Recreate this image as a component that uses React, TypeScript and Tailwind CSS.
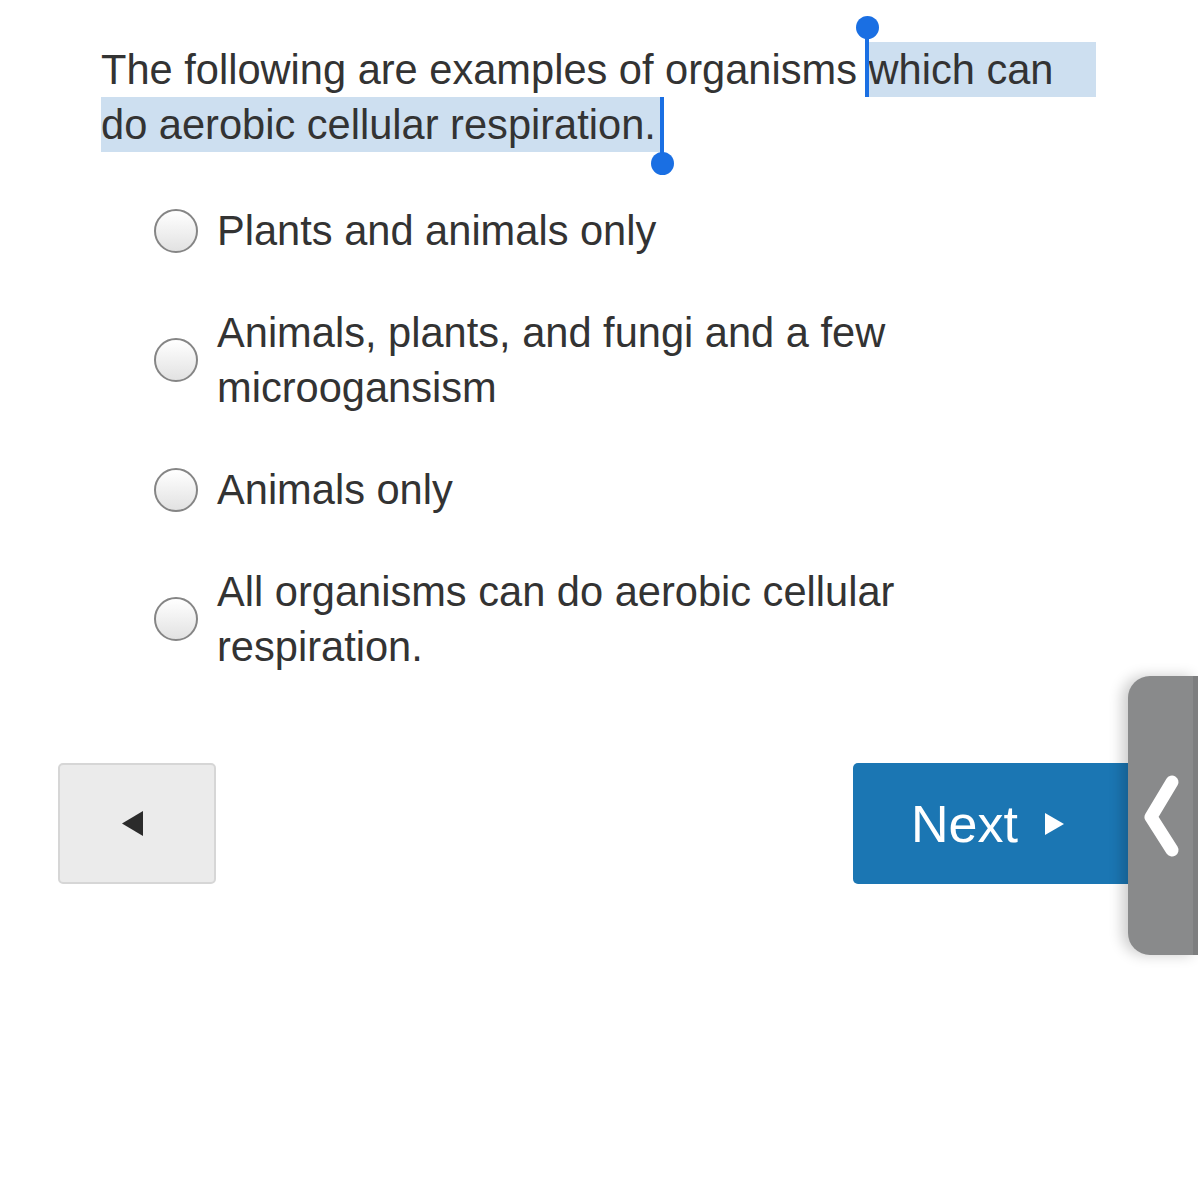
import { useState } from "react";

const options = [
  "Plants and animals only",
  "Animals, plants, and fungi and a few microogansism",
  "Animals only",
  "All organisms can do aerobic cellular respiration.",
];

function Radio({ checked }: { checked: boolean }) {
  return (
    <span className="flex h-[44px] w-[44px] shrink-0 items-center justify-center rounded-full border-[2.5px] border-[#858585] bg-gradient-to-b from-[#ffffff] to-[#e2e2e2]">
      {checked && <span className="h-[18px] w-[18px] rounded-full bg-[#333]" />}
    </span>
  );
}

export default function App() {
  const [selected, setSelected] = useState<number | null>(null);

  return (
    <div
      className="relative min-h-[1200px] overflow-hidden bg-white text-[#333]"
      style={{ fontFamily: '"Liberation Sans", Arial, sans-serif' }}
    >
      <div className="px-[101px] pt-[42px]">
        <p className="relative text-[41.6px] leading-[55px]">
          {/* selection highlight */}
          <span className="absolute left-[767px] top-0 h-[55px] w-[228px] bg-[#cddff0]" />
          <span className="absolute left-0 top-[55px] h-[55px] w-[562px] bg-[#cddff0]" />
          <span className="relative">
            The following are examples of organisms which can do aerobic cellular respiration.
          </span>
          {/* handles */}
          <span className="absolute left-[764px] top-[-15px] h-[70px] w-[4px] bg-[#1a6fe3]" />
          <span className="absolute left-[755px] top-[-26px] h-[23px] w-[23px] rounded-full bg-[#1a6fe3]" />
          <span className="absolute left-[559px] top-[55px] h-[58px] w-[4px] bg-[#1a6fe3]" />
          <span className="absolute left-[550px] top-[110px] h-[23px] w-[23px] rounded-full bg-[#1a6fe3]" />
        </p>
      </div>

      <div className="mt-[51px] flex flex-col gap-[47px] pl-[154px]">
        {options.map((opt, i) => (
          <button
            key={opt}
            type="button"
            onClick={() => setSelected(i)}
            className="flex items-center gap-[19px] text-left"
          >
            <Radio checked={selected === i} />
            <span className="w-[760px] text-[41.6px] leading-[55px]">{opt}</span>
          </button>
        ))}
      </div>

      <div className="mt-[89px] flex items-start justify-between pl-[58px] pr-[58px]">
        <button
          type="button"
          className="flex h-[121px] w-[158px] items-center justify-center rounded-[5px] border-2 border-[#d6d6d6] bg-[#ebebeb] pr-[8px]"
        >
          <svg width="22" height="25" viewBox="0 0 22 25">
            <polygon points="0,12.5 21,0 21,25" fill="#2b2b2b" />
          </svg>
        </button>
        <button
          type="button"
          className="flex h-[121px] w-[287px] items-center gap-[27px] rounded-[5px] bg-[#1b76b3] pl-[58px] text-white"
        >
          <span className="text-[52px] leading-none">Next</span>
          <svg width="19" height="22" viewBox="0 0 19 22">
            <polygon points="0,0 19,11 0,22" fill="#ffffff" />
          </svg>
        </button>
      </div>

      {/* side drawer tab */}
      <div className="absolute right-0 top-[676px] flex h-[279px] w-[70px] items-center rounded-l-[22px] bg-[#898a8b] pl-[15px] shadow-[-6px_0_14px_rgba(0,0,0,0.2)]">
        <svg width="38" height="88" viewBox="0 0 38 88">
          <polyline
            points="29,10 8,45 29,78"
            fill="none"
            stroke="#ffffff"
            strokeWidth="13"
            strokeLinecap="round"
            strokeLinejoin="round"
          />
        </svg>
        <span className="ml-auto h-full w-[5px] bg-[#7d7e7f]" />
      </div>
    </div>
  );
}
